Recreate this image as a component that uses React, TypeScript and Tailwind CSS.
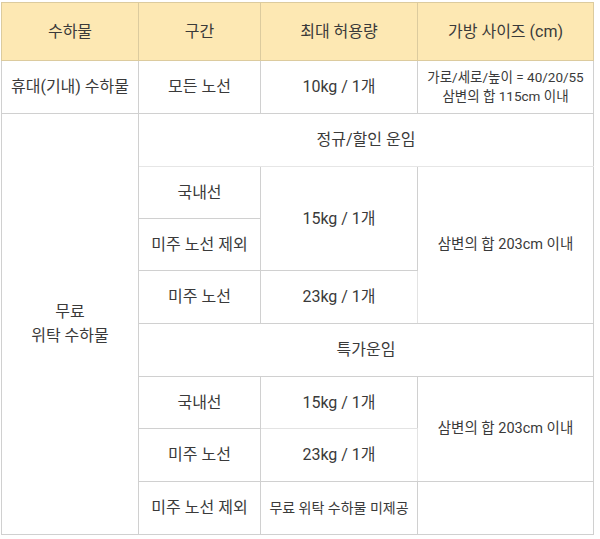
import React from "react";

const font = { fontFamily: 'Roboto, "Noto Sans CJK KR", sans-serif' };

const th = "h-[58px] border border-[#dccb9e] bg-[#fde8b3] text-[16px] font-normal text-[#3a3a3a]";
const cell = "border border-[#d0d0d0] p-0 text-center align-middle whitespace-nowrap text-[#3a3a3a]";
const td = `${cell} h-[53px] text-[16px]`;
const tdShort = `${cell} h-[52px] text-[16px]`;
const span = `${cell} text-[16px]`;

export default function App() {
    return (
        <div className="min-h-screen bg-white pt-[2px] pl-[1px]" style={font}>
            <table className="w-[592px] table-fixed border-collapse border border-[#c8c8c8]">
                <colgroup>
                    <col className="w-[137px]" />
                    <col className="w-[122px]" />
                    <col className="w-[157px]" />
                    <col className="w-[176px]" />
                </colgroup>
                <thead>
                    <tr>
                        <th className={th}>수하물</th>
                        <th className={th}>구간</th>
                        <th className={th}>최대 허용량</th>
                        <th className={th}>가방 사이즈 (cm)</th>
                    </tr>
                </thead>
                <tbody>
                    <tr>
                        <td className={td}>휴대(기내) 수하물</td>
                        <td className={td}>모든 노선</td>
                        <td className={td}>10kg / 1개</td>
                        <td className={`${cell} text-[13.5px] leading-[19px]`}>
                            가로/세로/높이 = 40/20/55
                            <br />
                            삼변의 합 115cm 이내
                        </td>
                    </tr>

                    {/* 무료 위탁 수하물 - 정규/할인 운임 */}
                    <tr>
                        <td rowSpan={8} className={`${span} leading-6`}>
                            무료
                            <br />
                            위탁 수하물
                        </td>
                        <td colSpan={3} className={`${td} border-b-[#e6e6e6]`}>정규/할인 운임</td>
                    </tr>
                    <tr>
                        <td className={tdShort}>국내선</td>
                        <td rowSpan={2} className={span}>15kg / 1개</td>
                        <td rowSpan={3} className={`${cell} border-l-[#e3e3e3] text-[14.5px]`}>삼변의 합 203cm 이내</td>
                    </tr>
                    <tr>
                        <td className={tdShort}>미주 노선 제외</td>
                    </tr>
                    <tr>
                        <td className={td}>미주 노선</td>
                        <td className={td}>23kg / 1개</td>
                    </tr>

                    {/* 특가운임 */}
                    <tr>
                        <td colSpan={3} className={td}>특가운임</td>
                    </tr>
                    <tr>
                        <td className={tdShort}>국내선</td>
                        <td className={`${tdShort} border-b-[#e3e3e3]`}>15kg / 1개</td>
                        <td rowSpan={2} className={`${cell} border-l-[#e3e3e3] text-[14.5px]`}>삼변의 합 203cm 이내</td>
                    </tr>
                    <tr>
                        <td className={td}>미주 노선</td>
                        <td className={td}>23kg / 1개</td>
                    </tr>
                    <tr>
                        <td className={td}>미주 노선 제외</td>
                        <td className={`${cell} text-[14px]`}>무료 위탁 수하물 미제공</td>
                        <td className={cell}></td>
                    </tr>
                </tbody>
            </table>
        </div>
    );
}
